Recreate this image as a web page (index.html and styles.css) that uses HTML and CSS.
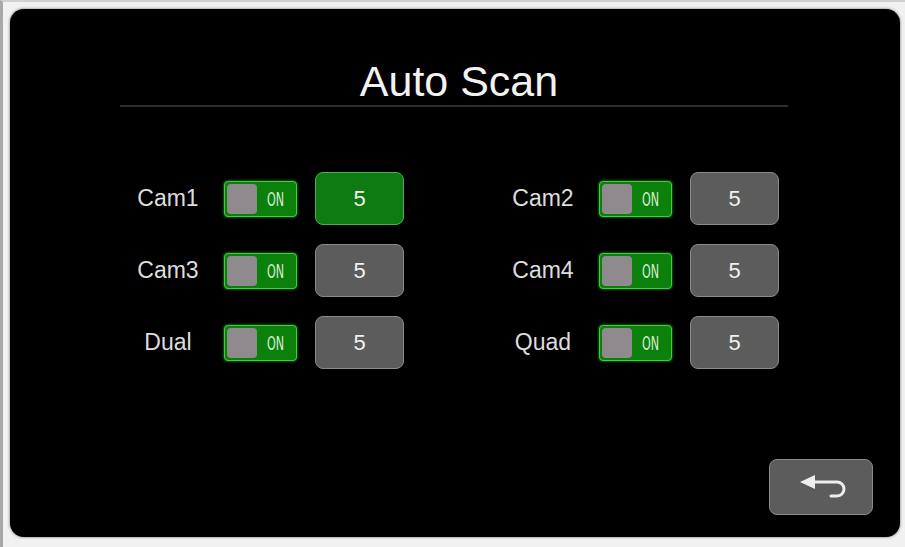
FILE: index.html
```html
<!DOCTYPE html>
<html lang="en">
<head>
    <meta charset="UTF-8">
    <meta name="viewport" content="width=device-width, initial-scale=1.0">
    <title>Auto Scan</title>
    <link rel="stylesheet" href="styles.css">
</head>
<body>
    <div class="frame">
        <div class="panel">
            <h1 class="title">Auto Scan</h1>

            <div class="scan-grid">
                <div class="scan-row">
                    <span class="cam-label">Cam1</span>
                    <div class="toggle"><span class="knob"></span><span class="toggle-text">ON</span></div>
                    <div class="value-box selected">5</div>
                </div>
                <div class="scan-row">
                    <span class="cam-label">Cam2</span>
                    <div class="toggle"><span class="knob"></span><span class="toggle-text">ON</span></div>
                    <div class="value-box">5</div>
                </div>
                <div class="scan-row">
                    <span class="cam-label">Cam3</span>
                    <div class="toggle"><span class="knob"></span><span class="toggle-text">ON</span></div>
                    <div class="value-box">5</div>
                </div>
                <div class="scan-row">
                    <span class="cam-label">Cam4</span>
                    <div class="toggle"><span class="knob"></span><span class="toggle-text">ON</span></div>
                    <div class="value-box">5</div>
                </div>
                <div class="scan-row">
                    <span class="cam-label">Dual</span>
                    <div class="toggle"><span class="knob"></span><span class="toggle-text">ON</span></div>
                    <div class="value-box">5</div>
                </div>
                <div class="scan-row">
                    <span class="cam-label">Quad</span>
                    <div class="toggle"><span class="knob"></span><span class="toggle-text">ON</span></div>
                    <div class="value-box">5</div>
                </div>
            </div>

            <button class="back-button" type="button">
                <svg class="back-icon" width="46" height="24" viewBox="0 0 46 24">
                    <polygon points="0,7 15,0 15,14" fill="#eeeeee"/>
                    <path d="M14 7 H37 A7 7 0 0 1 37 21 H31" fill="none" stroke="#eeeeee" stroke-width="3" stroke-linecap="round"/>
                </svg>
            </button>
        </div>
    </div>
</body>
</html>
```

FILE: styles.css
```css
html, body {
    margin: 0;
    padding: 0;
}

body {
    background-color: #f1f1f1;
    font-family: "Liberation Sans", Arial, sans-serif;
}

.frame {
    width: 905px;
    height: 547px;
    box-sizing: border-box;
    padding: 7px 5px 10px 7px;
    border-left: 3px solid #a8a8a8;
    border-top: 2px solid #d0d0d0;
}

.panel {
    height: 528px;
    background-color: #000;
    border-radius: 14px;
    box-shadow: 0 0 3px #6a6a6a;
    display: flex;
    flex-direction: column;
}

.title {
    margin: 48px 112px 0 110px;
    padding-left: 10px;
    font-size: 43px;
    font-weight: normal;
    line-height: 48px;
    text-align: center;
    color: #f2f2f2;
    border-bottom: 2px solid #2e2e2e;
}

.scan-grid {
    display: grid;
    grid-template-columns: 276px 276px;
    column-gap: 99px;
    row-gap: 19px;
    margin-top: 65px;
    padding-left: 118px;
}

.scan-row {
    display: flex;
    align-items: center;
    height: 53px;
}

.cam-label {
    width: 80px;
    text-align: center;
    font-size: 23px;
    color: #dddddd;
    margin-right: 16px;
}

.toggle {
    width: 73px;
    height: 36px;
    box-sizing: border-box;
    border: 1px solid #3fcf3f;
    border-radius: 4px;
    background-color: #0b800b;
    box-shadow: 0 0 3px #2fa82f;
    display: flex;
    align-items: center;
    padding: 2px;
    margin-right: 18px;
}

.knob {
    width: 30px;
    height: 30px;
    border-radius: 4px;
    background-color: #8e8a8e;
}

.toggle-text {
    flex: 1;
    text-align: center;
    font-family: "DejaVu Sans Condensed", "DejaVu Sans", sans-serif;
    font-stretch: condensed;
    font-size: 20px;
    color: #d6ecd6;
    transform: scaleX(0.62);
}

.value-box {
    width: 89px;
    height: 53px;
    box-sizing: border-box;
    border: 1px solid #8a8a8a;
    border-radius: 8px;
    background-color: #5c5c5c;
    color: #f0f0f0;
    font-size: 22px;
    display: flex;
    align-items: center;
    justify-content: center;
}

.value-box.selected {
    background-color: #0d7a12;
    border-color: #4caf50;
}

.back-button {
    margin-top: auto;
    margin-bottom: 22px;
    margin-right: 27px;
    align-self: flex-end;
    width: 104px;
    height: 56px;
    border: 1px solid #8a8a8a;
    border-radius: 8px;
    background-color: #5c5c5c;
    display: flex;
    align-items: center;
    justify-content: center;
    padding: 0 0 0 4px;
}

.back-icon {
    display: block;
}
```
